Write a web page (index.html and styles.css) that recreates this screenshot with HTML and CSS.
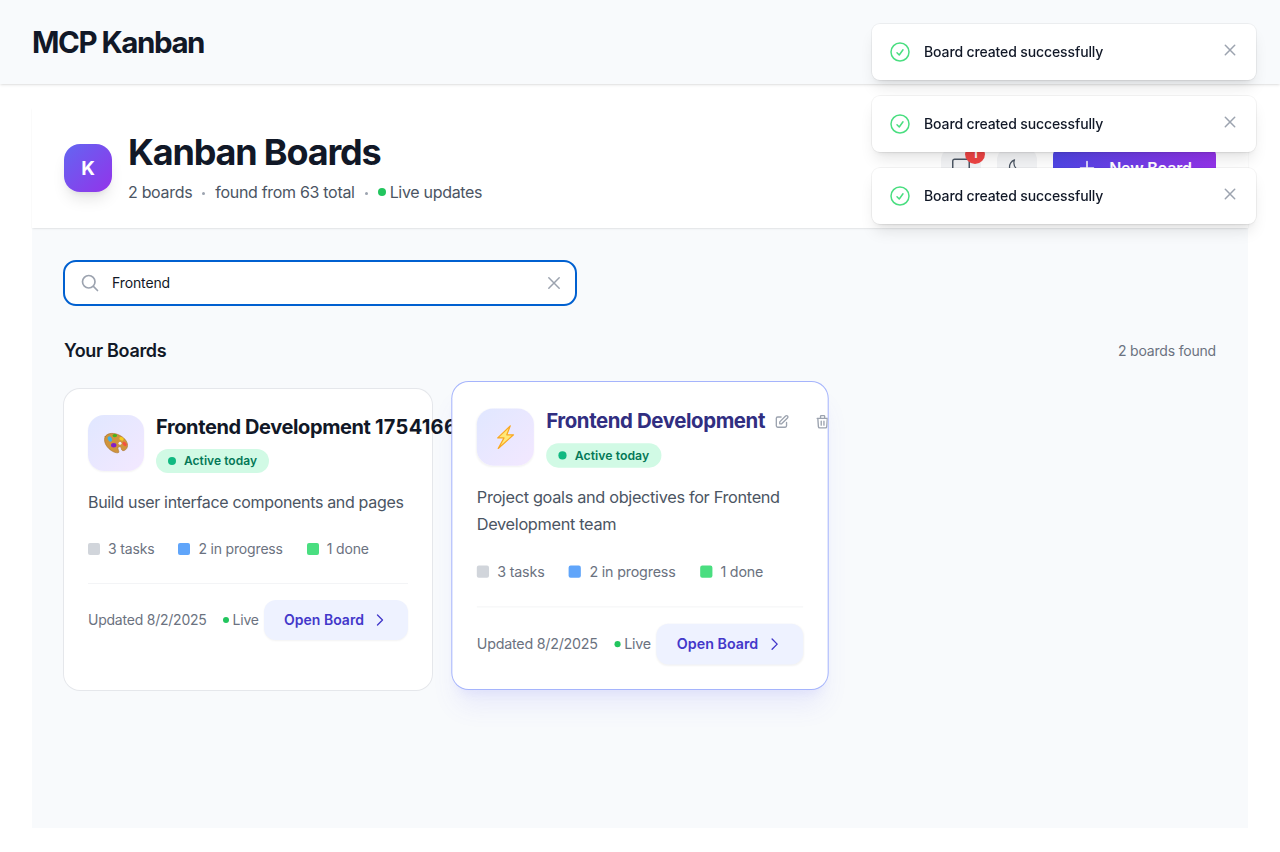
FILE: index.html
```html
<!DOCTYPE html>
<html lang="en">
<head>
<meta charset="utf-8">
<title>MCP Kanban</title>
<link rel="stylesheet" href="styles.css">
</head>
<body>
<svg class="defs" width="0" height="0">
  <symbol id="check" viewBox="0 0 24 24"><path d="M9 12.75 11.25 15 15 9.75M21 12a9 9 0 1 1-18 0 9 9 0 0 1 18 0Z"/></symbol>
  <symbol id="x" viewBox="0 0 20 20"><path d="M5.3 5.3l9.4 9.4M14.7 5.3l-9.4 9.4"/></symbol>
  <symbol id="chevron" viewBox="0 0 24 24"><path d="m8.25 4.5 7.5 7.5-7.5 7.5"/></symbol>
</svg>
<header class="topbar"><h1>MCP Kanban</h1></header>
<main class="panel">
  <section class="hero">
    <div class="logo">K</div>
    <div class="heading">
      <h2>Kanban Boards</h2>
      <p class="meta"><span>2 boards</span><i class="sep"></i><span>found from 63 total</span><i class="sep"></i><span class="live"><i class="dot"></i>Live updates</span></p>
    </div>
    <div class="actions">
      <button class="square"><svg class="chat" viewBox="0 0 24 24"><path d="M9 15H5a2 2 0 0 1-2-2V4.500a2 2 0 0 1 2-2h14a2 2 0 0 1 2 2V13a2 2 0 0 1-2 2h-5l-5 5v-5z"/></svg><span class="count">1</span></button>
      <button class="square"><svg viewBox="0 0 24 24"><path d="M21.752 15.002A9.72 9.72 0 0 1 18 15.75c-5.385 0-9.75-4.365-9.75-9.75 0-1.33.266-2.597.748-3.752A9.753 9.753 0 0 0 3 11.25C3 16.635 7.365 21 12.75 21a9.753 9.753 0 0 0 9.002-5.998Z"/></svg></button>
      <button class="new"><svg viewBox="0 0 20 20"><path d="M10 3.500v13M3.500 10h13"/></svg>New Board</button>
    </div>
  </section>
  <section class="content">
    <label class="search">
      <svg class="lens" viewBox="0 0 24 24"><path d="m21 21-5.197-5.197m0 0A7.5 7.5 0 1 0 5.196 5.196a7.5 7.5 0 0 0 10.607 10.607Z"/></svg>
      <span class="query">Frontend</span>
      <svg class="clear" viewBox="0 0 20 20"><path d="M4.800 4.800l10.400 10.400M15.200 4.800 4.800 15.200"/></svg>
    </label>
    <div class="list-head"><h3>Your Boards</h3><span class="found">2 boards found</span></div>
    <div class="grid">
      <article class="card">
        <div class="card-head">
          <div class="tile"><svg viewBox="0 0 24 24">
            <path fill="#d0943c" stroke="#a8712a" stroke-width=".6" d="M1.200 5.500C3.500 1.700 10 1.300 16 4.500c5.500 2.900 8.300 7.500 7.400 11.300-.6 2.600-3 4.300-4.800 3.800-1.700-.5-.7-3.100-2.400-3.800-1.700-.6-2.700.7-2.200 2.100.7 2.100 1.500 3.600-.1 3.900C9.900 22.300 3 17.500 1.100 12 .3 9.600.3 7.300 1.200 5.500Z"/>
            <ellipse cx="10.800" cy="4.600" rx="2.300" ry="1.700" fill="#43b51b"/><ellipse cx="5.900" cy="8" rx="2" ry="2.800" fill="#3bb3ee" transform="rotate(-25 5.900 8)"/><ellipse cx="17.500" cy="7.800" rx="2.300" ry="1.700" fill="#f4cc21" transform="rotate(25 17.500 7.800)"/><ellipse cx="20.600" cy="13" rx="2.600" ry="1.600" fill="#f4523f" transform="rotate(45 20.600 13)"/><ellipse cx="9.700" cy="14.300" rx="2.700" ry="2.200" fill="#8220c8"/><circle cx="16" cy="12.200" r="1.500" fill="#f0eaff"/>
          </svg></div>
          <div class="title-block"><div class="title-row"><h4>Frontend Development <span class="stamp">1754166</span></h4></div><span class="badge"><i></i>Active today</span></div>
        </div>
        <p class="desc">Build user interface components and pages</p>
        <div class="stats"><span><i class="todo"></i><b>3 tasks</b></span><span><i class="doing"></i><b>2 in progress</b></span><span><i class="done"></i><b>1 done</b></span></div>
        <footer><span class="updated">Updated 8/2/2025</span><span class="card-live"><i></i><b>Live</b></span><button class="open"><b>Open Board</b><svg viewBox="0 0 24 24"><use href="#chevron"/></svg></button></footer>
      </article>
      <article class="card hovered">
        <div class="card-head">
          <div class="tile"><svg viewBox="0 0 24 24"><path d="M16.800 1 4.500 12.800h6.200L5 23.200 20 9.800h-6.600Z" fill="#ffe878" stroke="#f9a822" stroke-width="1.200" stroke-linejoin="round"/></svg></div>
          <div class="title-block"><div class="title-row"><h4>Frontend Development</h4>
            <svg class="tool edit" viewBox="0 0 24 24"><path d="M11 5H6a2 2 0 0 0-2 2v11a2 2 0 0 0 2 2h11a2 2 0 0 0 2-2v-5m-1.414-9.414a2 2 0 1 1 2.828 2.828L11.828 15H9v-2.828l8.586-8.586z"/></svg>
            <svg class="tool" viewBox="0 0 24 24"><path d="m19 7-.867 12.142A2 2 0 0 1 16.138 21H7.862a2 2 0 0 1-1.995-1.858L5 7m5 4v6m4-6v6m1-10V4a1 1 0 0 0-1-1h-4a1 1 0 0 0-1 1v3M4 7h16"/></svg>
          </div><span class="badge"><i></i>Active today</span></div>
        </div>
        <p class="desc">Project goals and objectives for Frontend Development team</p>
        <div class="stats"><span><i class="todo"></i><b>3 tasks</b></span><span><i class="doing"></i><b>2 in progress</b></span><span><i class="done"></i><b>1 done</b></span></div>
        <footer><span class="updated">Updated 8/2/2025</span><span class="card-live"><i></i><b>Live</b></span><button class="open"><b>Open Board</b><svg viewBox="0 0 24 24"><use href="#chevron"/></svg></button></footer>
      </article>
    </div>
  </section>
</main>
<aside class="toasts">
  <div class="toast"><svg class="ok"><use href="#check"/></svg><span>Board created successfully</span><svg class="close"><use href="#x"/></svg></div>
  <div class="toast"><svg class="ok"><use href="#check"/></svg><span>Board created successfully</span><svg class="close"><use href="#x"/></svg></div>
  <div class="toast"><svg class="ok"><use href="#check"/></svg><span>Board created successfully</span><svg class="close"><use href="#x"/></svg></div>
</aside>
</body>
</html>
```
FILE: styles.css
```css
* { box-sizing: border-box; }
body, h1, h2, h3, h4, p { margin: 0; }
b { font-weight: inherit; padding-bottom: 1px; }
body { font-family: Inter, "Liberation Sans", sans-serif; background: #fff; color: #111827; height: 852px; overflow: hidden; -webkit-font-smoothing: antialiased; }
svg { fill: none; stroke: currentColor; stroke-width: 1.5; stroke-linecap: round; stroke-linejoin: round; flex: none; }
.defs { position: absolute; }
button { font: inherit; border: 0; padding: 0; }
.topbar { height: 84px; padding: 24px 32px; background: #f8fafc; box-shadow: 0 1px 3px rgba(0,0,0,.1), 0 1px 2px -1px rgba(0,0,0,.1); }
.topbar h1 { font-size: 29.5px; line-height: 37px; font-weight: 700; letter-spacing: -1.45px; }
.panel { margin: 24px 32px 0; height: 720px; background: #f8fafc; }
.hero { height: 120px; padding: 24px 32px; display: flex; align-items: center; background: #fff; box-shadow: 0 1px 2px rgba(0,0,0,.06), 0 1px 2px -1px rgba(0,0,0,.1); clip-path: inset(0 -1px -4px); }
.logo { width: 48px; height: 48px; border-radius: 16px; background: linear-gradient(135deg, #6366f1, #9333ea); color: #fff; font-size: 19px; font-weight: 700; display: flex; align-items: center; justify-content: center; box-shadow: 0 10px 15px -3px rgba(0,0,0,.1), 0 4px 6px -4px rgba(0,0,0,.1); }
.heading { margin-left: 16px; }
.heading h2 { font-size: 36px; line-height: 40px; font-weight: 700; letter-spacing: -1.18px; }
.meta { display: flex; align-items: center; margin-top: 8px; font-size: 16px; line-height: 24px; color: #4b5563; letter-spacing: -.31px; }
.sep { width: 3px; height: 3px; border-radius: 50%; background: #9ca3af; margin: 2px 10px 0; }
.live { display: flex; align-items: center; gap: 4px; }
.dot { width: 8px; height: 8px; border-radius: 50%; background: #22c55e; }
.actions { margin-left: auto; display: flex; align-items: center; gap: 16px; }
.square { width: 40px; height: 40px; border-radius: 12px; background: #f3f4f6; color: #4b5563; position: relative; display: flex; align-items: center; justify-content: center; }
.square svg { width: 20px; height: 20px; }
.square .chat { width: 22px; height: 22px; stroke-width: 1.6; }
.count { position: absolute; top: -4px; right: -4px; width: 20px; height: 20px; border-radius: 50%; background: #ef4444; color: #fff; font-size: 12px; line-height: 20px; font-weight: 700; text-align: center; }
.new { width: 163px; height: 48px; border-radius: 12px; background: linear-gradient(90deg, #4f46e5, #9333ea); color: #fff; font-size: 16px; font-weight: 600; letter-spacing: -.2px; display: flex; align-items: center; justify-content: center; gap: 12px; }
.new svg { width: 20px; height: 20px; }
.content { padding: 32px; }
.search { display: flex; align-items: center; width: 514px; height: 46px; margin: 0 -1px; padding: 0 11px 0 15px; border: 2px solid #0060d0; border-radius: 13px; background: #fff; font-size: 14px; }
.lens { width: 20px; height: 20px; color: #9ca3af; stroke-width: 2; }
.query { margin-left: 12px; flex: 1; letter-spacing: -.12px; padding-bottom: 1px; }
.clear { width: 20px; height: 20px; color: #9ca3af; stroke-width: 1.5; }
.list-head { display: flex; justify-content: space-between; align-items: center; margin: 31px 0 24px; height: 28px; font-size: 14px; color: #6b7280; }
.found { letter-spacing: -.19px; padding-bottom: 1px; }
.list-head h3 { font-size: 18px; line-height: 28px; font-weight: 600; color: #111827; letter-spacing: -.33px; }
.grid { display: grid; grid-template-columns: repeat(3, 1fr); gap: 24px; }
.card { min-width: 0; padding: 24px; height: 301px; border-radius: 16px; background: #fff; box-shadow: 0 0 0 1px #e5e7eb; }
.card-head { display: flex; align-items: center; gap: 12px; height: 60px; }
.tile { flex: none; width: 56px; height: 56px; border-radius: 16px; background: linear-gradient(135deg, #e0e7ff, #f3e8ff); box-shadow: 0 1px 2px rgba(0,0,0,.05); display: flex; align-items: center; justify-content: center; }
.tile svg { width: 24px; height: 24px; stroke: none; }
.title-block { min-width: 0; }
.title-row { display: flex; align-items: center; height: 28px; margin-bottom: 8px; }
h4 { font-size: 20px; line-height: 28px; font-weight: 700; white-space: nowrap; letter-spacing: -.39px; }
.stamp { letter-spacing: .3px; }
.badge { display: flex; align-items: center; gap: 8px; width: 113px; height: 24px; padding: 0 0 1px 12px; border-radius: 12px; background: #d1fae5; color: #047857; font-size: 12px; font-weight: 600; letter-spacing: .04px; }
.badge i { width: 8px; height: 8px; border-radius: 50%; background: #10b981; }
.desc { margin-top: 16px; font-size: 16px; line-height: 26px; color: #4b5563; letter-spacing: -.33px; }
.stats { display: flex; gap: 24px; margin-top: 24px; height: 20px; font-size: 14px; color: #6b7280; letter-spacing: -.17px; }
.stats span { display: flex; align-items: center; gap: 8px; }
.stats i { width: 12px; height: 12px; border-radius: 2px; }
.todo { background: #d1d5db; }
.doing { background: #60a5fa; }
.done { background: #4ade80; }
footer { display: flex; align-items: center; margin-top: 24px; padding-top: 16px; border-top: 1px solid #f3f4f6; font-size: 14px; color: #6b7280; letter-spacing: -.23px; }
.updated { padding-bottom: 1px; }
.card-live { display: flex; align-items: center; gap: 4px; margin-left: 16px; }
.card-live i { width: 6px; height: 6px; border-radius: 50%; background: #22c55e; }
.open { margin-left: auto; width: 144px; height: 40px; border-radius: 12px; background: #eef2ff; color: #4338ca; font-weight: 600; letter-spacing: 0; display: flex; align-items: center; justify-content: center; gap: 8px; box-shadow: 0 1px 2px rgba(0,0,0,.05); }
.open svg { width: 16px; height: 16px; stroke-width: 2; }
.hovered { overflow: hidden; transform: translateY(-4px) scale(1.02); box-shadow: 0 0 0 1px #a5b4fc, 0 20px 25px -5px rgba(99,102,241,.1), 0 8px 10px -6px rgba(99,102,241,.1); }
.hovered h4 { color: #312e81; }
.tool { width: 16px; height: 16px; color: #9ca3af; stroke-width: 2; position: relative; top: 1px; }
.edit { margin: 0 24px 0 8px; }
.toasts { position: fixed; top: 24px; right: 24px; width: 384px; display: flex; flex-direction: column; gap: 16px; }
.toast { display: flex; height: 56px; padding: 16px; border-radius: 8px; background: #fff; font-size: 14px; line-height: 24px; font-weight: 500; letter-spacing: -.12px; box-shadow: 0 0 0 1px rgba(0,0,0,.05), 0 10px 15px -3px rgba(0,0,0,.1), 0 4px 6px -4px rgba(0,0,0,.1); }
.toast span { margin-left: 12px; flex: 1; }
.ok { width: 24px; height: 24px; color: #4ade80; }
.close { width: 20px; height: 20px; color: #9ca3af; }
```
